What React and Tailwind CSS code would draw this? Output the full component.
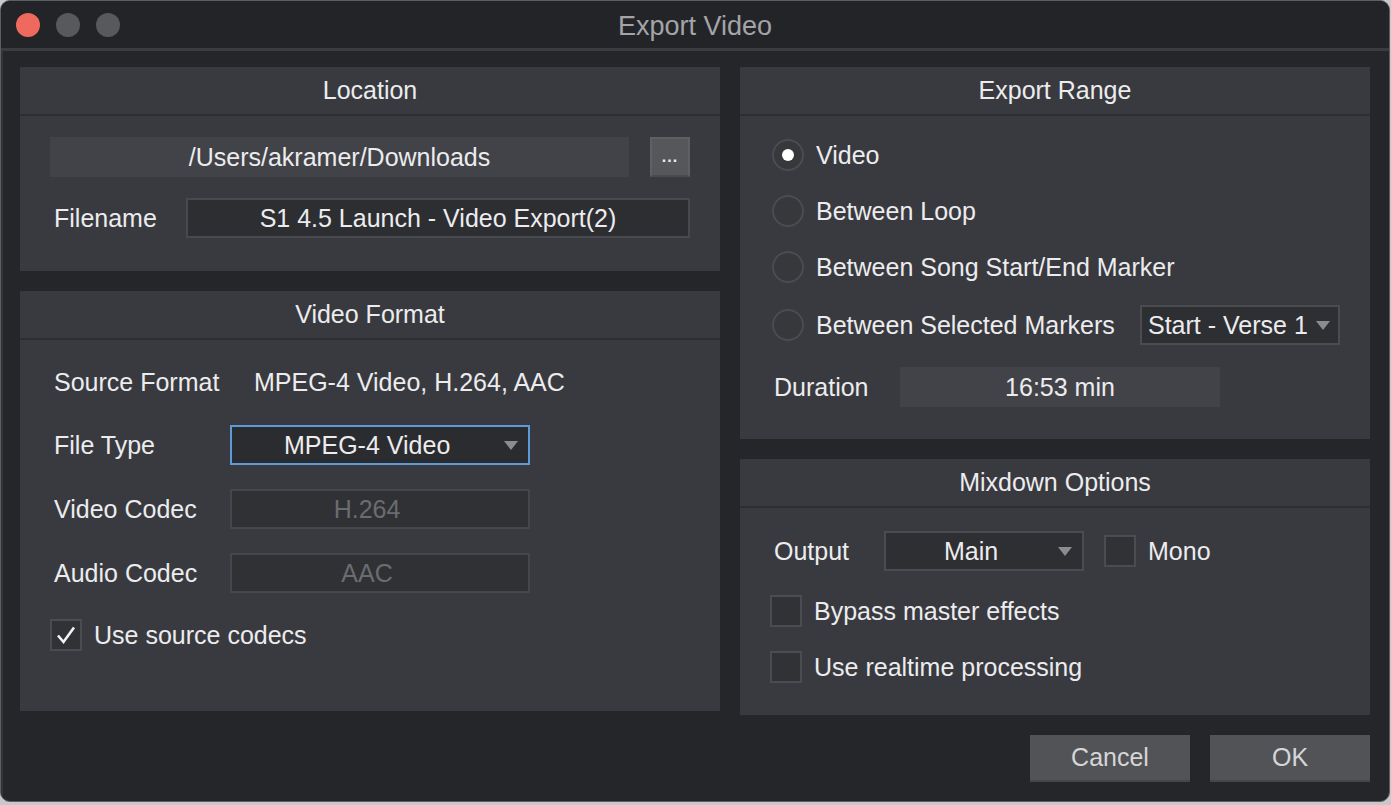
import React from 'react';

const font = { fontFamily: '"Liberation Sans", Arial, sans-serif' };

function Arrow() {
  return (
    <svg width="14" height="9" viewBox="0 0 14 9" className="shrink-0">
      <path d="M0 0 L14 0 L7 9 Z" fill="#8b8c90" />
    </svg>
  );
}

function Panel({ title, className, children }) {
  return (
    <div className={`bg-[#393a3f] flex flex-col ${className}`}>
      <div className="h-[49px] shrink-0 flex items-center justify-center border-b-2 border-[#2d2e32] text-[#ececee]">
        {title}
      </div>
      <div className="flex-1">{children}</div>
    </div>
  );
}

function Box({ checked }) {
  return (
    <div className="w-[32px] h-[32px] shrink-0 border-2 border-[#4b4c51] bg-[#313236] flex items-center justify-center">
      {checked && (
        <svg width="22" height="22" viewBox="0 0 22 22">
          <path d="M3 11.5 L8.5 18 L19 3.5" fill="none" stroke="#f2f2f4" strokeWidth="2.6" />
        </svg>
      )}
    </div>
  );
}

function Radio({ on, label, className = '', children }) {
  return (
    <div className={`flex items-center h-[40px] pr-[30px] ${className}`}>
      <div className="w-[32px] h-[32px] shrink-0 rounded-full border-2 border-[#4b4c51] bg-[#37383c] flex items-center justify-center">
        {on && <div className="w-[12px] h-[12px] rounded-full bg-white" />}
      </div>
      <span className="ml-[12px] whitespace-nowrap">{label}</span>
      {children}
    </div>
  );
}

export default function App() {
  return (
    <div style={font} className="w-[1391px] h-[805px] bg-[#c9c9cb] text-[25px] text-[#ececee] leading-none">
      <div className="w-[1390px] h-[802px] rounded-[10px] overflow-hidden border border-[#5d5e62] bg-[#25262a] flex flex-col">
        {/* title bar */}
        <div className="h-[47px] shrink-0 bg-[#232428] relative flex items-center pl-[15px] gap-[16px]">
          <div className="w-[24px] h-[24px] rounded-full bg-[#ee6a5f]" />
          <div className="w-[24px] h-[24px] rounded-full bg-[#58595d]" />
          <div className="w-[24px] h-[24px] rounded-full bg-[#58595d]" />
          <div className="absolute inset-0 flex items-center justify-center pt-[3px] text-[27px] text-[#a3a4a8]">Export Video</div>
        </div>
        <div className="h-[3px] shrink-0 bg-[#3b3c40]" />

        <div className="flex-1 flex gap-[20px] pl-[17px] pt-[16px] border-l-2 border-[#333438]">
          {/* left column */}
          <div className="w-[700px] flex flex-col gap-[20px]">
            <Panel title="Location" className="h-[204px]">
              <div className="px-[30px] pt-[21px] flex flex-col gap-[21px]">
                <div className="flex gap-[21px]">
                  <div className="w-[580px] h-[40px] bg-[#424348] flex items-center justify-center">/Users/akramer/Downloads</div>
                  <div className="w-[40px] h-[40px] bg-[#55575b] border-2 border-[#5f6064] border-b-[#4a4b4f] flex items-end justify-center pb-[10px] text-[16px] font-bold tracking-[1px]">...</div>
                </div>
                <div className="flex items-center">
                  <span className="w-[136px] pl-[4px]">Filename</span>
                  <div className="flex-1 h-[40px] bg-[#2d2e32] border-2 border-[#48494e] flex items-center justify-center">S1 4.5 Launch - Video Export(2)</div>
                </div>
              </div>
            </Panel>

            <Panel title="Video Format" className="h-[420px]">
              <div className="pl-[34px] pt-[22px] flex flex-col">
                <div className="flex items-center h-[40px]">
                  <span className="w-[200px]">Source Format</span>
                  <span>MPEG-4 Video, H.264, AAC</span>
                </div>
                <div className="flex items-center h-[40px] mt-[23px]">
                  <span className="w-[176px]">File Type</span>
                  <div className="w-[300px] h-[40px] bg-[#2b2c30] border-2 border-[#5d9bd8] flex items-center pl-[52px] pr-[10px]">
                    <span className="flex-1">MPEG-4 Video</span>
                    <Arrow />
                  </div>
                </div>
                <div className="flex items-center h-[40px] mt-[24px]">
                  <span className="w-[176px]">Video Codec</span>
                  <div className="w-[300px] h-[40px] bg-[#303135] border-2 border-[#46474c] flex items-center justify-center pr-[26px] text-[#6b6c70]">H.264</div>
                </div>
                <div className="flex items-center h-[40px] mt-[24px]">
                  <span className="w-[176px]">Audio Codec</span>
                  <div className="w-[300px] h-[40px] bg-[#303135] border-2 border-[#46474c] flex items-center justify-center pr-[26px] text-[#6b6c70]">AAC</div>
                </div>
                <div className="flex items-center mt-[26px] -ml-[4px]">
                  <Box checked />
                  <span className="ml-[12px]">Use source codecs</span>
                </div>
              </div>
            </Panel>
          </div>

          {/* right column */}
          <div className="w-[630px] flex flex-col">
            <Panel title="Export Range" className="h-[372px]">
              <div className="pl-[32px] pt-[19px] flex flex-col gap-[16px]">
                <Radio on label="Video" />
                <Radio label="Between Loop" />
                <Radio label="Between Song Start/End Marker" />
                <Radio label="Between Selected Markers" className="mt-[2px]">
                  <div className="ml-auto w-[200px] h-[40px] border-2 border-[#4b4c51] bg-[#2e2f33] flex items-center pl-[6px] pr-[8px]">
                    <span className="flex-1 whitespace-nowrap">Start - Verse 1</span>
                    <Arrow />
                  </div>
                </Radio>
                <div className="flex items-center h-[40px] mt-[6px] pl-[2px]">
                  <span className="w-[126px]">Duration</span>
                  <div className="w-[320px] h-[40px] bg-[#424348] flex items-center justify-center">16:53 min</div>
                </div>
              </div>
            </Panel>

            <Panel title="Mixdown Options" className="h-[256px] mt-[20px]">
              <div className="pl-[30px] pt-[23px] flex flex-col">
                <div className="flex items-center h-[40px] pl-[4px]">
                  <span className="w-[110px]">Output</span>
                  <div className="w-[200px] h-[40px] border-2 border-[#4b4c51] bg-[#2e2f33] flex items-center pl-[58px] pr-[10px]">
                    <span className="flex-1">Main</span>
                    <Arrow />
                  </div>
                  <div className="ml-[20px]"><Box /></div>
                  <span className="ml-[12px]">Mono</span>
                </div>
                <div className="flex items-center mt-[24px]">
                  <Box />
                  <span className="ml-[12px]">Bypass master effects</span>
                </div>
                <div className="flex items-center mt-[24px]">
                  <Box />
                  <span className="ml-[12px]">Use realtime processing</span>
                </div>
              </div>
            </Panel>

            <div className="flex justify-end gap-[20px] mt-[20px]">
              <div className="w-[160px] h-[47px] bg-[#515357] border-b-2 border-[#45464a] flex items-center justify-center text-[#d6d6d8]">Cancel</div>
              <div className="w-[160px] h-[47px] bg-[#515357] border-b-2 border-[#45464a] flex items-center justify-center text-[#d6d6d8]">OK</div>
            </div>
          </div>
        </div>
      </div>
    </div>
  );
}
